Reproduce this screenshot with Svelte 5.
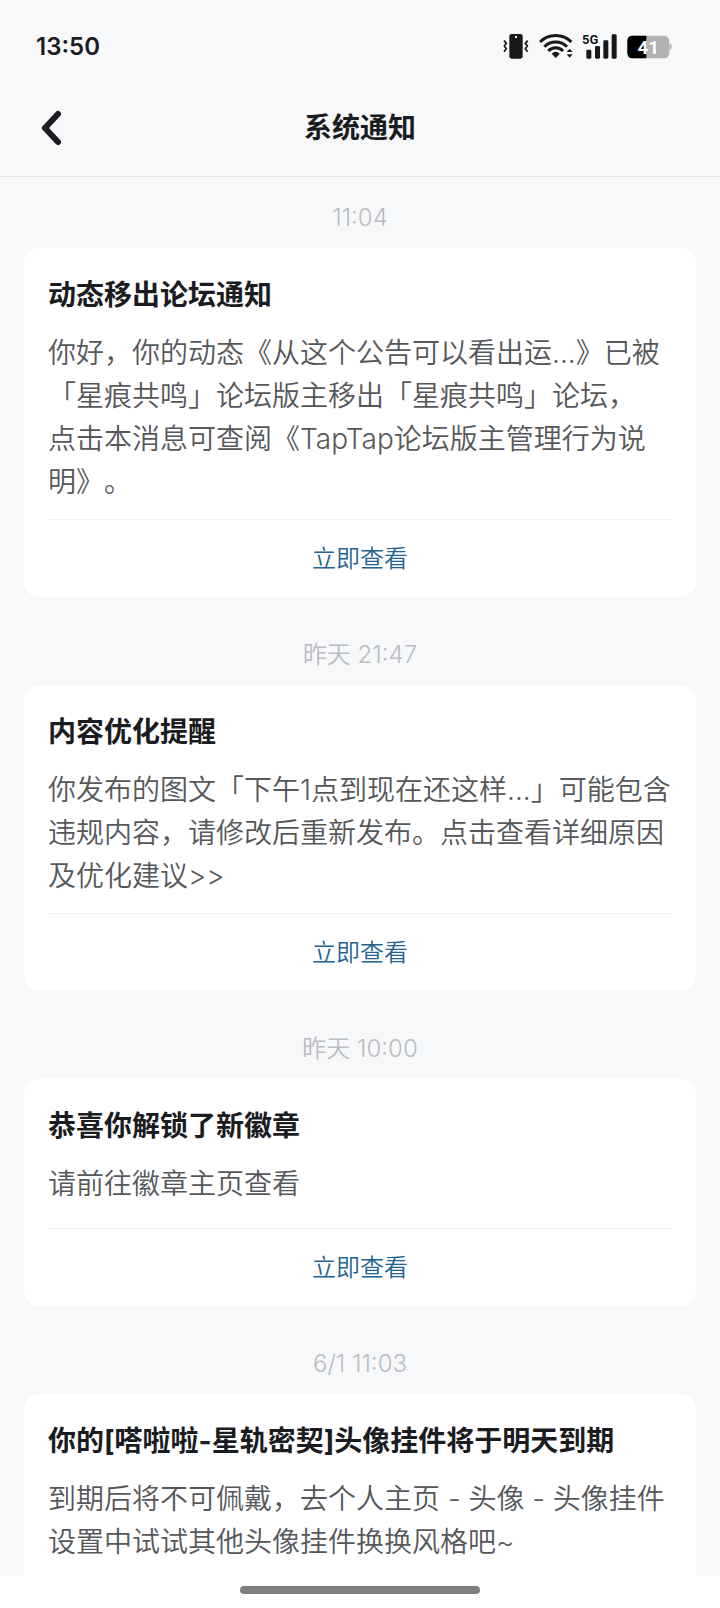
<script>
    const notices = [
        {
            id: 1,
            time: '11:04',
            title: '动态移出论坛通知',
            text: '你好，你的动态《从这个公告可以看出运...》已被\n「星痕共鸣」论坛版主移出「星痕共鸣」论坛，\n点击本消息可查阅《TapTap论坛版主管理行为说\n明》。',
            action: '立即查看'
        },
        {
            id: 2,
            time: '昨天 21:47',
            title: '内容优化提醒',
            text: '你发布的图文「下午1点到现在还这样...」可能包含\n违规内容，请修改后重新发布。点击查看详细原因\n及优化建议>>',
            action: '立即查看'
        },
        {
            id: 3,
            time: '昨天 10:00',
            title: '恭喜你解锁了新徽章',
            text: '请前往徽章主页查看',
            action: '立即查看'
        },
        {
            id: 4,
            time: '6/1 11:03',
            title: '你的[嗒啦啦-星轨密契]头像挂件将于明天到期',
            text: '到期后将不可佩戴，去个人主页 - 头像 - 头像挂件\n设置中试试其他头像挂件换换风格吧~'
        }
    ];
</script>

<div class="page">
    <div class="statusBar">
        <span class="clock">13:50</span>
        <div class="statusIcons">
            <!-- vibrate -->
            <svg width="27" height="27" viewBox="38 40 81 81">
                <rect x="57" y="43" width="40" height="74" rx="7" fill="#17181a" />
                <circle cx="77" cy="52" r="3.5" fill="#f7f8fa" />
                <path d="M41 63 L48 71 L42 79 L48 87 L41 96 M112 63 L105 71 L111 79 L105 87 L112 96" fill="none" stroke="#17181a" stroke-width="5" />
            </svg>
            <!-- wifi -->
            <svg width="34" height="27" viewBox="146 40 102 81">
                <g fill="none" stroke="#17181a" stroke-width="9">
                    <path d="M149 67 C174 41 218 41 243 67" />
                    <path d="M162 81 C180 62 212 62 230 81" />
                    <path d="M174 94 C186 81 206 81 218 94" />
                </g>
                <path d="M184 102 Q196 91 208 102 L196 115 Z" fill="#17181a" />
                <path d="M229 97 L238 87 L247 97 Z M229 104 L247 104 L238 114 Z" fill="#17181a" />
            </svg>
            <!-- signal -->
            <svg width="36" height="27" viewBox="275 40 108 81">
                <text x="275" y="73" class="net">5G</text>
                <g fill="#17181a">
                    <rect x="288" y="90" width="15" height="27" rx="4" />
                    <rect x="314" y="79" width="15" height="38" rx="4" />
                    <rect x="339" y="62" width="15" height="55" rx="4" />
                    <rect x="364" y="44" width="15" height="73" rx="4" />
                </g>
            </svg>
            <!-- battery -->
            <svg width="45" height="27" viewBox="410 40 135 81">
                <rect x="411" y="48" width="126" height="68" rx="16" fill="#b1b2b4" />
                <path d="M468 48 V116 H427 Q411 116 411 100 V64 Q411 48 427 48 Z" fill="#000" />
                <path d="M538 71 Q544 73 544 82 Q544 91 538 93 Z" fill="#b1b2b4" />
                <text x="474" y="103" text-anchor="middle" class="level">41</text>
            </svg>
        </div>
    </div>

    <header class="navBar">
        <button class="back" aria-label="返回">
            <svg width="20" height="36" viewBox="0 0 20 36">
                <path d="M17 4 L4 18 L17 32" fill="none" stroke="#1b1c1f" stroke-width="6" stroke-linecap="round" stroke-linejoin="round" />
            </svg>
        </button>
        <h1>系统通知</h1>
    </header>

    <main class="list">
        {#each notices as notice (notice.id)}
            <time>{notice.time}</time>
            <article class="card">
                <h2>{notice.title}</h2>
                <p>{notice.text}</p>
                {#if notice.action}
                    <button class="action">{notice.action}</button>
                {/if}
            </article>
        {/each}
    </main>

    <div class="homeBar"><span></span></div>
</div>

<style>
    :global(body){
        margin: 0;
        background: #f7f8fa;
    }

    .page{
        display: flex;
        flex-direction: column;
        height: 100vh;
        background: #f7f8fa;
        color: #1b1c1f;
        font-family: Inter, "Noto Sans CJK SC", sans-serif;
        text-spacing-trim: space-all;
    }

    .statusBar{
        display: flex;
        flex-shrink: 0;
        align-items: center;
        justify-content: space-between;
        height: 68px;
        padding: 12px 48px 0px 36px;
    }

    .clock{
        font-size: 24px;
        font-weight: 600;
    }

    .statusIcons{
        display: flex;
        gap: 9px;
    }

    .net{
        font: 700 39px Roboto, sans-serif;
        fill: #17181a;
    }

    .level{
        font: 700 57px Roboto, sans-serif;
        fill: #fff;
    }

    .navBar{
        display: grid;
        flex-shrink: 0;
        grid-template-columns: 61px 1fr 61px;
        align-items: center;
        height: 96px;
        border-bottom: 1px solid #e2e4e7;
    }

    button{
        background: unset;
        border: unset;
        padding: 0px;
        font-family: inherit;
        cursor: pointer;
    }

    .back{
        display: flex;
        justify-content: flex-end;
    }

    h1, h2{
        margin: 0px;
        font-size: 28px;
        line-height: 46px;
        font-weight: 700;
    }

    h1{
        text-align: center;
    }

    .list{
        display: flex;
        flex: 1;
        flex-direction: column;
        min-height: 0px;
        padding: 0px 24px;
        overflow-y: auto;
        scrollbar-width: none;
    }

    time{
        flex-shrink: 0;
        margin: 44px 0px 16px;
        color: #b9bcc1;
        font-size: 24px;
        font-weight: 350;
        line-height: 28px;
        text-align: center;
    }

    time:first-child{
        margin-top: 27px;
    }

    .card{
        display: flex;
        flex-direction: column;
        flex-shrink: 0;
        box-sizing: border-box;
        min-height: 227px;
        padding: 24px 24px 0px;
        border-radius: 16px;
        background: #fff;
    }

    p{
        min-height: 50px;
        margin: 14px 0px 15px;
        color: #55575a;
        font-size: 28px;
        font-weight: 350;
        line-height: 43px;
        white-space: pre-line;
    }

    .action{
        height: 78px;
        padding-bottom: 4px;
        border-top: 1px solid #f1f2f4;
        color: #22648f;
        font-size: 24px;
        font-weight: 350;
    }

    .homeBar{
        display: flex;
        flex-shrink: 0;
        align-items: center;
        justify-content: center;
        height: 28px;
        padding-bottom: 4px;
        background: #fff;
    }

    .homeBar span{
        width: 240px;
        height: 8px;
        border-radius: 4px;
        background: #808080;
    }
</style>
